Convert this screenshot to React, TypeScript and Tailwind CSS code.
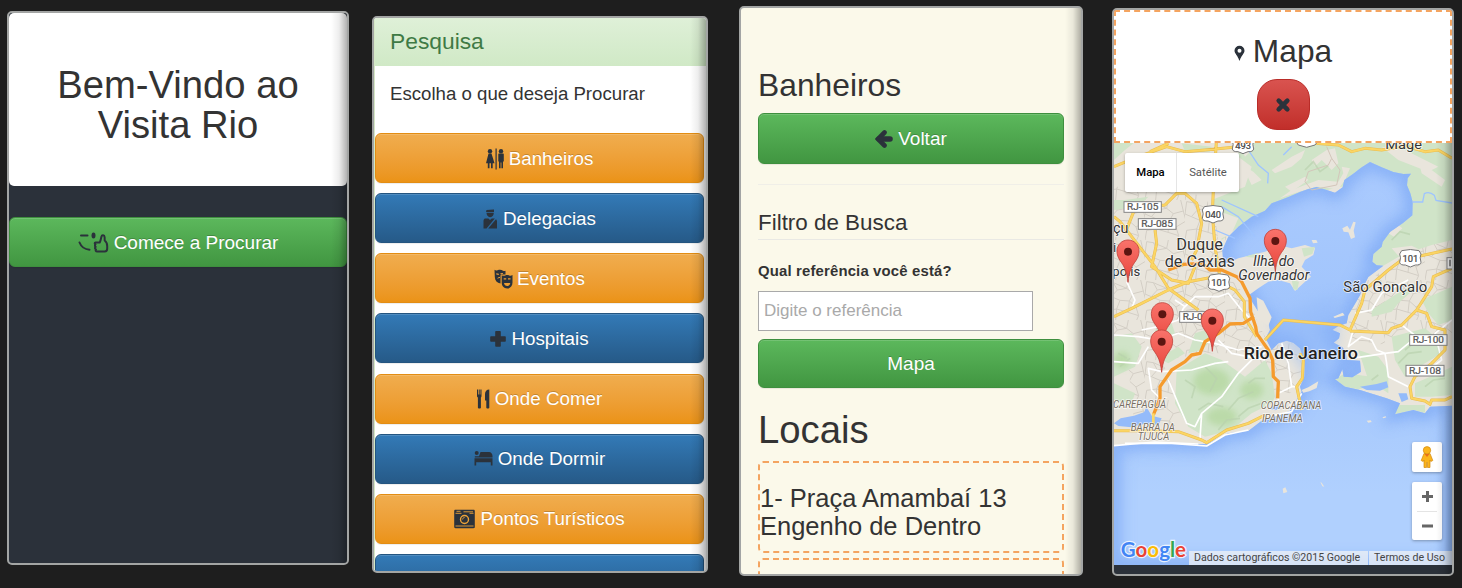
import React from "react";

const INK = "#2b323b";

function Phone({ className, children }: { className: string; children: React.ReactNode }) {
  return (
    <section className={`relative shrink-0 overflow-hidden rounded-[5px] border-2 border-[#a3a5a4] ${className}`}>
      {children}
      <div className="pointer-events-none absolute inset-y-0 right-0 w-[16px] bg-gradient-to-r from-transparent via-black/7 to-black/30" />
    </section>
  );
}

const tones = {
  green: "from-[#5cb85c] to-[#419641] border-[#3e8f3e]",
  orange: "from-[#f0ad4e] to-[#eb9316] border-[#e38d13]",
  blue: "from-[#337ab7] to-[#265a88] border-[#245580]",
};

function Button({ tone, className, children }: { tone: keyof typeof tones; className: string; children: React.ReactNode }) {
  return (
    <button
      className={`flex w-full shrink-0 items-center justify-center rounded-[6px] border bg-gradient-to-b pt-px leading-[24px] text-white shadow-[inset_0_1px_0_rgba(255,255,255,.15),0_1px_1px_rgba(0,0,0,.075)] [text-shadow:0_-1px_0_rgba(0,0,0,.2)] ${tones[tone]} ${className}`}
    >
      {children}
    </button>
  );
}

function Icon({ w, h = 20, className = "mr-[5px]", children }: { w: number; h?: number; className?: string; children: React.ReactNode }) {
  return (
    <svg width={w} height={h} viewBox={`0 0 ${w} ${h}`} fill={INK} className={`shrink-0 ${className}`}>
      {children}
    </svg>
  );
}

const GreetIcon = () => (
  <Icon w={31} h={22} className="mr-[5px]">
    <g fill="none" stroke={INK} strokeWidth="2" strokeLinecap="round" strokeLinejoin="round">
      <path d="M3 3.500h6.500M1.500 10.500c1.500 3.800 5 6.800 10 7.200" />
      <path d="M17.500 10.500h4.200c.9-1.600 1.200-3.500 1.700-5.800.5-2 3-1.700 3.200.3l.1 3.500c1.800 1.300 2.500 3 2.500 5.500v2.500c0 1.800-.8 3-2.500 3h-7.500c-1.500 0-2-1.200-1.200-2.100-1.300-.5-1.300-2-.3-2.500-1-.6-1-1.900-.2-2.400-1.100-.6-1-2 0-2z" />
    </g>
    <ellipse cx="15.500" cy="3.500" rx="2" ry="3" />
  </Icon>
);

const RestroomIcon = () => (
  <Icon w={18} h={22}>
    <circle cx="4" cy="3.200" r="2.200" />
    <path d="M2.500 5.500h3L8.500 15.300H6.700v5H5V15.300H3.500v5H1.800v-5H0z" />
    <path d="M9.500.5h1.200v21H9.500z" />
    <circle cx="15" cy="3.200" r="2.200" />
    <path d="M12.300 6.500c0-.6.4-1 1-1h3.500c.6 0 1 .4 1 1v7h-.8V20.300h-1.600V14.500h-.8v5.800H13V13.500h-.7z" />
  </Icon>
);

const PoliceIcon = () => (
  <Icon w={15} h={20}>
    <path d="M3.500 1 11 .5v2.500h-8zM3.500 3.800h7.300c.1 2.200-1.300 4.400-3.600 4.400S3.400 6 3.500 3.800z" />
    <path d="M1.800 9.500h3.600L7 11l1.700-1.500h3.100L3.500 19.500H.5v-7.300c0-1.400.5-2.200 1.300-2.700zM13 10.200c.7.500 1 1.300 1 2.300v7H5.200z" />
  </Icon>
);

const MasksIcon = () => (
  <Icon w={19} h={20} className="mr-[4px]">
    <path fillRule="evenodd" d="M.5.800c1 .9 2 .9 3 .5 2.500-.8 4-.4 5.500.4.900.4 1.800.3 2.500 0v3.800H8c-1 0-1.500.4-1.500 1.400v7.500C3 13.900 1 11.700.8 8zM2.300 4.200l2.500.6V6L2.300 5.400zM6.400 4.300l2.500-.4v1.100l-2.500.3zM3.300 10c.8-.9 1.600-1 2.700-1V8C4.500 7.800 3.500 8.500 3.300 10z" />
    <path fillRule="evenodd" d="M7.700 6.200c1 .7 2.500.7 3.500.2 1.300-.5 2.700-.5 4 0 1 .4 2.200.3 3.300-.3v7.500c0 3.500-2.400 5.900-5.400 5.900s-5.400-2.400-5.400-5.900zM9.700 9.300v1.200h2.500V9.300zM14 9.300v1.200h2.500V9.300zM10 14c.5 2.200 1.500 3 3.100 3s2.700-.8 3.200-3z" />
  </Icon>
);

const CrossIcon = () => (
  <Icon w={16} h={20}>
    <path d="M6 2h4c.4 0 .8.300.8.800v4.400H15c.5 0 .8.300.8.800v4c0 .5-.3.800-.8.800h-4.200V17c0 .5-.4.800-.8.800H6c-.5 0-.8-.3-.8-.8v-4.200H1c-.5 0-.8-.3-.8-.8V8c0-.5.3-.8.8-.8h4.200V2.800c0-.5.3-.8.800-.8z" />
  </Icon>
);

const CutleryIcon = () => (
  <Icon w={13} h={20}>
    <path d="M0 .5h1v5h.7v-5h1v5h.7v-5h1.100v6.500c0 .9-.3 1.300-.6 1.500v10c0 .7-.5 1-1.500 1s-1.500-.3-1.500-1v-10C.5 8.300 0 7.800 0 7zM12.300.5v18c0 .6-.5 1-1.500 1s-1.500-.4-1.500-1v-7H8V5C8 2.500 9.700.5 12.300.5z" />
  </Icon>
);

const BedIcon = () => (
  <Icon w={19} h={20} className="mr-[5px] mb-[3px]">
    <circle cx="2.700" cy="5" r="2" />
    <path d="M.5 10.200h18V17.500h-1.700v-3.300H2.200v3.300H.5zM6.500 4h8.500c2 0 3.500 1.800 3.500 4v1.500H.8V8.200H5z" />
  </Icon>
);

const CameraIcon = () => (
  <Icon w={21} h={20}>
    <path fillRule="evenodd" d="M1.500.8h18c.8 0 1.300.5 1.300 1.300v16c0 .8-.5 1.200-1.300 1.200h-18c-.8 0-1.300-.4-1.300-1.200v-16C.2 1.300.7.800 1.500.800z" />
    <path d="M2.500 2.300h4M9.500 2.800h9.500M1.500 4.300h6M15.500 4.300h4M1.500 17h18" stroke="#eda338" strokeWidth=".9" />
    <circle cx="10.500" cy="10.500" r="4" fill="none" stroke="#eda338" strokeWidth="1.400" />
    <path d="M8.600 10.500c0-1 .8-2 2-2" fill="none" stroke="#eda338" strokeWidth=".9" />
  </Icon>
);

const menu: { label: string; icon: () => React.JSX.Element }[] = [
  { label: "Banheiros", icon: RestroomIcon },
  { label: "Delegacias", icon: PoliceIcon },
  { label: "Eventos", icon: MasksIcon },
  { label: "Hospitais", icon: CrossIcon },
  { label: "Onde Comer", icon: CutleryIcon },
  { label: "Onde Dormir", icon: BedIcon },
  { label: "Pontos Turísticos", icon: CameraIcon },
];

function Marker({ x, y }: { x: number; y: number }) {
  return (
    <g transform={`translate(${x} ${y})`}>
      <path
        d="M0 0C-3-34-12-49-23-64C-30-74-33-83-33-94C-33-113-18-127 0-127S33-113 33-94C33-83 30-74 23-64C12-49 3-34 0 0Z"
        fill="url(#pin)"
        stroke="#c2433c"
        strokeWidth="2.500"
      />
      <circle cy="-92" r="12" fill="#5c1511" />
    </g>
  );
}

function Plate({ x, y, w, text }: { x: number; y: number; w: number; text: string }) {
  return (
    <g>
      <rect x={x} y={y} width={w} height="32" fill="#fff" stroke="#858585" strokeWidth="3" />
      <text x={x + w / 2} y={y + 26} fontSize="29" textAnchor="middle" textLength={w - 18} lengthAdjust="spacingAndGlyphs" fill="#555" stroke="#555" strokeWidth=".7">
        {text}
      </text>
    </g>
  );
}

function Shield({ x, y, text }: { x: number; y: number; text: string }) {
  return (
    <g transform={`translate(${x} ${y})`}>
      <path d="M-26-23Q0-30 26-23L32-13Q27-3 32 12Q30 21 15 20L0 26L-15 20Q-30 21-32 12Q-27-3-32-13Z" fill="#fff" stroke="#777" strokeWidth="3" />
      <text y="11" fontSize="28" textAnchor="middle" fill="#444" stroke="#444" strokeWidth=".7">
        {text}
      </text>
    </g>
  );
}

const BLOCKS =
  "M5 5l20 3l12 22l-18 20l-19-8zM37 30l28-5l20 16l-12 22l-28-2l-26-11M65 25l5-25M85 41l30-8l8 30l-30 18l-20-18M45 61l-10 26l-30 4M73 63l-4 34l-34-10M93 81l8 26l-32-10M5 91l-5 29M35 87l-3 33M101 107l-6 13M25 8l40 17M115 33l-8-33";

const WATER =
  "M525 601L552 590L585 576L610 567L635 561L665 570L690 578L713 562L718 540L745 521L768 503L795 486L830 502L865 516L895 522L918 521L908 535L906 556L916 580L923 606L922 646L895 668L855 696L833 726L830 740L805 762L802 785L815 796L835 797L790 831L775 860L765 886L748 915L730 945L725 970L700 978L682 990L705 1000L702 1015L686 1028L712 1042L722 1055L725 1080L765 1082L768 1115L742 1132L716 1130L712 1108L700 1135L690 1138L720 1160L765 1170L845 1195L885 1210L870 1243L925 1230L960 1240L975 1220L1041 1217V1695H27V1336L120 1328L220 1330L305 1333L370 1300L430 1293L470 1262L510 1250L555 1232L590 1175L585 1160L598 1130L600 1085L585 1045L565 1028L545 1022L520 1030L500 1050L482 1015L495 990L488 960L460 935L438 900L430 870L400 830L355 790L352 750L370 710L400 680L440 650L480 632L500 610Z";

const ROADS =
  "M27 500L100 470L185 440L240 455L300 450L400 440M135 455L190 430M334 426L325 570L322 640L330 740L345 830M630 430L700 435L740 455L780 445L830 450L900 438L960 455L1000 450L1041 475M27 650L45 665L150 800L190 865L280 930M60 700L90 625L180 615L215 580L240 580L275 610L290 670L275 750L260 780M150 690L155 730L140 800L200 840L250 850L270 800M27 950L80 925L190 870L250 845L330 830M350 850L390 870L418 905L418 950L455 1010M480 1020L535 960L705 975L735 990L770 910L780 870L850 810L890 780L1041 747M735 993L850 998L860 985L890 975L935 930L980 860L985 830L1041 805M935 930L965 940L980 980L1020 990L1020 1050L980 1090L930 1130L915 1160L920 1195L960 1203L975 1213L980 1200L1020 1200L1041 1190M27 1292H130L220 1295L290 1320L305 1328L365 1290L430 1270L480 1245M590 1230L575 1160L592 1135L595 1080L585 1060";

function RioMap() {
  return (
    <svg width="338" height="423" viewBox="27 426 1014 1269" fontFamily="Roboto, sans-serif" className="block">
      <defs>
        <linearGradient id="pin" x1="0" y1="0" x2="0" y2="1">
          <stop offset="0" stopColor="#f9736b" />
          <stop offset="1" stopColor="#e8453c" />
        </linearGradient>
        <linearGradient id="sea" gradientUnits="userSpaceOnUse" x1="0" y1="480" x2="0" y2="1480">
          <stop offset="0" stopColor="#abcbfe" />
          <stop offset=".5" stopColor="#a0c4fc" />
          <stop offset="1" stopColor="#b0d0fe" />
        </linearGradient>
        <clipPath id="coast">
          <path d={WATER} />
        </clipPath>
        <pattern id="blocks" width="120" height="120" patternUnits="userSpaceOnUse">
          <path d={BLOCKS} fill="none" stroke="#d3cec5" strokeWidth="3" />
        </pattern>
        <filter id="soft" x="-20%" y="-20%" width="140%" height="140%">
          <feGaussianBlur stdDeviation="9" />
        </filter>
        <filter id="haze" x="-20%" y="-20%" width="140%" height="140%">
          <feGaussianBlur stdDeviation="20" />
        </filter>
      </defs>

      <rect x="27" y="426" width="1014" height="1269" fill="#e9e5dc" />
      <path
        d="M27 560H180L300 590L370 720L360 790L430 850L450 950L480 1010L430 1060L300 1060L180 1080L100 1160L27 1010ZM760 860L850 800L960 720H1041V1000L960 1060L880 1040L740 1020L730 960ZM470 1040L560 1030L590 1090L580 1170L500 1200L440 1100ZM70 1100L170 1080L230 1230L200 1300L90 1290Z"
        fill="url(#blocks)"
      />

      <g fill="#d0e4c8">
        <path d="M400 426H1041V720L980 735L890 765L835 797L815 796L802 785L805 762L833 726L900 560H700L570 600L500 640L455 700L400 680L350 720L320 600L420 560L440 500L400 470Z" />
        <path d="M27 426H90L60 450L27 480ZM60 600L130 590L110 610L70 625L27 630V600ZM230 430L320 440L315 455H240Z" />
        <path d="M27 1010L80 1000L110 1040L90 1100L27 1130ZM27 1150L90 1180L80 1210L27 1200ZM150 990L200 970L210 1000L170 1020ZM270 1000L300 990L330 1010L290 1050L250 1060ZM160 1075L220 1040L240 1060L190 1090Z" />
        <path d="M215 1110L300 1060L350 1080L420 1130L480 1080L500 1120L510 1190L500 1210L440 1240L380 1290L300 1310L250 1280L210 1210Z" />
        <path d="M800 930L870 885L930 850L925 870L880 910L860 935L800 950ZM950 900L1041 860V960L1000 975L970 940ZM860 1010L960 985L990 1010L1010 1060L960 1090L900 1130L870 1080ZM760 1050L820 1070L850 1110L850 1180L790 1140ZM690 1138L720 1120L800 1130L840 1150L760 1168L720 1160ZM930 1150L1000 1120L1041 1100V1185L980 1190L930 1190ZM880 1215L960 1215L960 1238L925 1230L870 1243Z" />
      </g>
      <g fill="#e9e5dc">
        <path d="M420 500L445 515L470 540L440 555L430 535ZM500 510L560 470L600 450L590 475L560 500L510 520ZM400 426H430L450 440L420 470ZM620 480L665 450L690 445L700 490L680 510L650 480L630 500ZM640 540L700 545L715 520L710 500L735 505L720 540L700 568L635 560L580 576L525 595L560 570Z" />
        <path d="M830 440L900 450L1000 500L970 515L880 480ZM940 480L1020 540L1010 560L950 520ZM540 560L600 530L610 540L560 575Z" />
        <path d="M330 650L360 640L400 655L380 700L340 720ZM860 745l60-8l20 10l-60 20ZM850 700l30-25l12 10l-25 25Z" />
      </g>
      <g fill="#b4d79f" opacity=".75" filter="url(#soft)">
        <ellipse cx="320" cy="1145" rx="55" ry="40" />
        <ellipse cx="440" cy="1170" rx="35" ry="28" />
        <ellipse cx="350" cy="1250" rx="45" ry="28" />
        <ellipse cx="50" cy="1080" rx="25" ry="25" />
      </g>
      <g stroke="#b9d2ae" strokeWidth="5" opacity=".7" fill="none">
        <path d="M240 1140l30 20l-10 35M300 1100l35 35l-20 40M280 1230l30-20l45 10M370 1230l30-35l45-20M400 1250l30-25l40-15M430 1150l20-15l30 0M340 1290l25-30l40-5M40 1060l25 15M45 1100l30-25" />
        <path d="M600 510l25-25l20 30l25-18M860 720l25-25l30 8M880 1090l30-30l40-5M900 1050l30-25l30 0M960 1160l25-20l35-5M800 1140l20-15" />
      </g>

      <path d={WATER} fill="url(#sea)" />
      <g clipPath="url(#coast)">
        <path d={WATER} fill="none" stroke="#84aef6" strokeWidth="50" opacity=".75" filter="url(#haze)" />
        <path d={WATER} fill="none" stroke="#84aef6" strokeWidth="14" opacity=".5" filter="url(#soft)" />
      </g>
      <path d="M500 960L690 880L700 1000L640 1180L600 1120L520 1010Z" fill="#8fb7f8" opacity=".45" filter="url(#haze)" />

      <g fill="#e9e5dc">
        <path d="M340 800L400 775L480 755L520 735L560 745L600 735L630 745L625 765L600 780L590 800L618 830L600 845L570 873L555 850L520 840L490 845L460 865L425 890L380 840Z" />
        <path d="M712 685l15-8l8 12l10-24l7 2l-6 25l4 20l-12 5l-8-20l-14-2Z" />
        <path d="M455 892l20 10l25 50l-10 25l-30-20ZM620 720l14 0l4 8l-14 2Z" />
        <path d="M590 1170l20-8l30-18l-5 20l-22 10l-18 4ZM785 1262l12-1l3 5l-10 2ZM832 1252l10-3l2 3l-8 3ZM533 1466l8-4l6 14l-12 4ZM646 1446l4 2l8 12l-6-1ZM685 950l28-12l6 8l-30 8Z" />
      </g>
      <g fill="#d0e4c8">
        <path d="M590 745l40-5l-8 22l-25 8ZM560 840l22 5l-5 25l-12-2ZM420 770l40-12l-10 15ZM505 740l20-6l5 22Z" />
      </g>
      <g fill="#94bbfa">
        <path d="M27 1270l20-15l40-8l30-10l8-15l15 25l30 8l-10 20l-35-5l-45 12l-40-4ZM490 1225l25-10l15 8l-20 8ZM765 1160l50-8l30-8l5 18l-25 10l-40-2ZM880 1180l25 0l5 18l-20 8Z" />
      </g>
      <g fill="none" stroke="#9ec4ff" strokeWidth="4">
        <path d="M430 450l30 45l30 25l-2 30M560 440l-25 25M350 620l50 30l50 60M923 606h30l5-25q15-8 30 5l5 15l48 8M350 600l110 50M330 690l60 25" />
      </g>

      <g fill="none" stroke="#fff" strokeWidth="5" strokeLinejoin="round">
        <path d="M27 1005L100 1010L160 1020L220 1000L270 1020L330 1030L400 1050L470 1040M65 845L90 900L80 925M210 900L240 920L270 890L340 890L370 880L410 930L440 960M270 890L235 925L220 960L160 980L110 990" />
        <path d="M170 1115L130 1105L140 1170L170 1200M170 1115L260 1110L330 1090L370 1085M190 1140L215 1200L245 1270L270 1280L290 1240L350 1190L400 1120L450 1070L480 1060M27 1085L100 1090L130 1040M27 1337L150 1326L280 1332M285 1315L290 1240" />
        <path d="M340 1020L380 1060L430 1070L480 1080M530 1030L550 1090L560 1160L575 1160M560 1160L520 1180L520 1200" />
        <path d="M745 990L730 1040L770 1010L800 1020L815 1050L840 1060L845 1090L850 1130L910 1160M750 940L800 930L830 880L910 840M840 1060L880 1055L935 1010L890 975M740 1075L840 1060M1041 960L990 1000L1010 1080L970 1110" />
        <path d="M430 1290L360 1305L305 1338L200 1330L60 1330M510 1245L560 1235L590 1180" />
      </g>
      <path d="M665 440l15 35l-10 20l-60 20l-10 30l20 25l75-15M680 475l25 35l-10 45" fill="none" stroke="#d3c6ba" strokeWidth="3" />

      <path d={ROADS} fill="none" stroke="#e9bc50" strokeWidth="9" strokeLinejoin="round" />
      <path d={ROADS} fill="none" stroke="#fbd564" strokeWidth="6" strokeLinejoin="round" />
      <path
        d="M190 810L235 793L290 790L315 810L350 810L395 830L410 845L435 895L437 935L452 980L455 1000L490 1050L503 1080L505 1130L520 1145L518 1195M447 950L415 970L375 972L340 1000L300 1025L285 1060L260 1065L240 1085L200 1110L165 1160V1195L145 1245"
        fill="none"
        stroke="#f59b2d"
        strokeWidth="10"
        strokeLinejoin="round"
      />
      <path d="M145 1240V1275" stroke="#fbd96b" strokeWidth="8" />

      <Plate x={57} y={605} w={112} text="RJ-105" />
      <Plate x={100} y={656} w={113} text="RJ-085" />
      <Plate x={224} y={935} w={112} text="RJ-071" />
      <Plate x={914} y={1004} w={112} text="RJ-100" />
      <Plate x={903} y={1096} w={114} text="RJ-108" />
      <rect x="1026" y="773" width="30" height="34" fill="#fff" stroke="#858585" strokeWidth="3" />
      <path d="M1035 779V799" stroke="#444" strokeWidth="3.500" />
      <Shield x={414} y={435} text="493" />
      <path d="M574 426L580 435L605 442L630 435L637 426Z" fill="#fff" stroke="#777" strokeWidth="3" />
      <Shield x={324} y={643} text="040" />
      <Shield x={342} y={848} text="101" />
      <Shield x={916} y={775} text="101" />

      <g fill="#343434" stroke="#fff" strokeWidth="5" strokeOpacity=".75" strokeLinejoin="round" paintOrder="stroke" fontSize="47">
        <text x="841" y="447" fontSize="40" textLength="110" lengthAdjust="spacingAndGlyphs">Magé</text>
        <text x="24" y="698" fontSize="43">çu</text>
        <text x="24" y="757" fontSize="40">i</text>
        <text x="22" y="828" fontSize="41" textLength="84" lengthAdjust="spacingAndGlyphs">polis</text>
        <text x="214" y="750" textLength="140" lengthAdjust="spacingAndGlyphs">Duque</text>
        <text x="179" y="800" textLength="211" lengthAdjust="spacingAndGlyphs">de Caxias</text>
        <text x="444" y="799" fontSize="41" fontStyle="italic" textLength="124" lengthAdjust="spacingAndGlyphs">Ilha do</text>
        <text x="400" y="840" fontSize="41" fontStyle="italic" textLength="213" lengthAdjust="spacingAndGlyphs">Governador</text>
        <text x="715" y="876" fontSize="43" textLength="252" lengthAdjust="spacingAndGlyphs">São Gonçalo</text>
        <text x="416" y="1078" fontSize="50" fontWeight="500" fill="#222" textLength="343" lengthAdjust="spacingAndGlyphs">Rio de Janeiro</text>
      </g>
      <g fill="#786f62" stroke="#fff" strokeWidth="5" strokeOpacity=".7" paintOrder="stroke" fontSize="30" fontStyle="italic">
        <text x="24" y="1225" textLength="159" lengthAdjust="spacingAndGlyphs">CAREPAGUÁ</text>
        <text x="77" y="1292" textLength="133" lengthAdjust="spacingAndGlyphs">BARRA DA</text>
        <text x="98" y="1321" textLength="95" lengthAdjust="spacingAndGlyphs">TIJUCA</text>
        <text x="467" y="1228" textLength="182" lengthAdjust="spacingAndGlyphs">COPACABANA</text>
        <text x="471" y="1267" textLength="122" lengthAdjust="spacingAndGlyphs">IPANEMA</text>
      </g>

      <Marker x={69} y={847} />
      <Marker x={511} y={815} />
      <Marker x={172} y={1035} />
      <Marker x={322} y={1054} />
      <Marker x={170} y={1117} />

      <text x="47" y="1672" fontSize="63" fontFamily="Lato, sans-serif" stroke="#fff" strokeWidth="7" strokeOpacity=".8" paintOrder="stroke" textLength="196" lengthAdjust="spacingAndGlyphs" fontWeight="700">
        <tspan fill="#4285f4">G</tspan>
        <tspan fill="#ea4335">o</tspan>
        <tspan fill="#fbbc05">o</tspan>
        <tspan fill="#4285f4">g</tspan>
        <tspan fill="#34a853">l</tspan>
        <tspan fill="#ea4335">e</tspan>
      </text>
    </svg>
  );
}

export default function App() {
  return (
    <main className="flex h-[588px] w-[1462px] items-start overflow-hidden bg-[#1e1e1e] pl-[7px] font-['Liberation_Sans',Arial,sans-serif] text-[#333]">
      <Phone className="mt-[11px] h-[554px] w-[342px] bg-[#2b313a]">
        <div className="h-[173px] rounded-[5px] bg-white pt-[52px] text-center text-[38.2px] leading-[40px]">
          <h1>
            Bem-Vindo ao
            <br />
            Visita Rio
          </h1>
        </div>
        <Button tone="green" className="mt-[31px] h-[50px] text-[19px]">
          <GreetIcon />
          Comece a Procurar
        </Button>
      </Phone>

      <Phone className="mt-[16px] ml-[23px] h-[557px] w-[336px] bg-white">
        <div className="flex h-full flex-col border-l border-[#d6e9c6] pr-[2px]">
          <h3 className="-mr-[2px] h-[48px] shrink-0 bg-gradient-to-b from-[#dff0d8] to-[#d0e9c6] pl-[15px] text-[22.8px] leading-[47px] text-[#3f7a45]">Pesquisa</h3>
          <p className="h-[67px] shrink-0 pl-[15px] text-[18.65px] leading-[56px]">Escolha o que deseja Procurar</p>
          <nav className="flex flex-col gap-[10.17px]">
            {menu.map(({ label, icon: Glyph }, i) => (
              <Button key={label} tone={i % 2 ? "blue" : "orange"} className="h-[50px] text-[18.8px]">
                <Glyph />
                {label}
              </Button>
            ))}
            <Button tone="blue" className="h-[50px]">
              <Icon w={21} h={20}>
                <path d="M0 1h20v15H0z" />
              </Icon>
            </Button>
          </nav>
        </div>
      </Phone>

      <Phone className="mt-[6px] ml-[31px] h-[570px] w-[344px] bg-[#fbf9ea]">
        <div className="flex flex-col pt-[56px] pr-[17px] pl-[17px]">
          <h2 className="h-[43px] text-[31.8px] leading-[43px]">Banheiros</h2>
          <Button tone="green" className="mt-[6px] h-[51px] text-[19px]">
            <Icon w={18} h={20}>
              <path d="M9.500 3.500 3 10l6.500 6.500" fill="none" stroke={INK} strokeWidth="4.600" strokeLinecap="round" strokeLinejoin="miter" />
              <path d="M4 10h11" stroke={INK} strokeWidth="5.600" strokeLinecap="round" />
            </Icon>
            Voltar
          </Button>
          <hr className="mt-[20px] border-[#f0efe8]" />
          <h3 className="mt-[21px] h-[34px] border-b border-[#e9e9e4] text-[22.4px] leading-[33px]">Filtro de Busca</h3>
          <label className="mt-[21px] h-[20px] text-[14.9px] leading-[21px] font-bold tracking-[0.16px]">Qual referência você está?</label>
          <input placeholder="Digite o referência" className="mt-[10px] h-[40px] w-[275px] border border-[#a9a9a9] bg-white px-[5px] text-[17px] placeholder:text-[#a9a9a9]" />
          <Button tone="green" className="mt-[8px] h-[49px] text-[19px]">
            Mapa
          </Button>
          <h1 className="mt-[22px] h-[40px] text-[38.3px] leading-[40px]">Locais</h1>
          <div className="mt-[11px] h-[92px] shrink-0 rounded-[5px] border-2 border-dashed border-[#f4a460] pt-[21px] text-[25.5px] leading-[28px]">
            1- Praça Amambaí 13
            <br />
            Engenho de Dentro
          </div>
          <div className="mt-[5px] h-[92px] shrink-0 rounded-[5px] border-2 border-dashed border-[#f4a460]" />
        </div>
      </Phone>

      <Phone className="mt-[8px] ml-[29px] h-[568px] w-[342px] bg-[#2b313a]">
        <header className="relative z-10 flex h-[133px] flex-col items-center border-2 border-dashed border-[#f4a460] bg-white pt-[18px]">
          <h2 className="flex h-[42px] items-center text-[31.7px] leading-[42px]">
            <Icon w={11} h={16} className="mt-[4px] mr-[8px]">
              <path fillRule="evenodd" d="M5.500.8a5 5 0 0 1 5 5C10.500 8.500 7 11 5.800 15.500h-.6C4 11 .5 8.500.5 5.800a5 5 0 0 1 5-5zM5.500 3.700a2 2 0 1 0 0 4a2 2 0 0 0 0-4z" />
            </Icon>
            Mapa
          </h2>
          <button className="mt-[7px] flex h-[51px] w-[53px] items-center justify-center rounded-[20px] border border-[#b92c28] bg-gradient-to-b from-[#d9534f] to-[#c12e2a]">
            <Icon w={16} h={16} className="mt-px">
              <path d="M3.700 3.700l8.600 8.600M12.300 3.700l-8.600 8.600" stroke={INK} strokeWidth="4.600" strokeLinecap="round" />
            </Icon>
          </button>
        </header>
        <div className="relative -mt-px h-[423px] font-[Roboto,sans-serif]">
          <RioMap />
          <div className="absolute top-[11px] left-[11px] flex h-[39px] w-[114px] rounded-[2px] bg-white text-center text-[11.3px] leading-[39px] shadow-[0_1px_3px_rgba(0,0,0,.3)]">
            <span className="w-[52px] border-r border-[#e5e5e5] font-medium text-black">Mapa</span>
            <span className="flex-1 text-[#565656]">Satélite</span>
          </div>
          <div className="absolute top-[300px] left-[298px] flex h-[30px] w-[30px] items-center justify-center rounded-[2px] bg-white shadow-[0_1px_3px_rgba(0,0,0,.3)]">
            <svg width="14" height="22" viewBox="0 0 14 22">
              <path d="M4 7.500h6l2.800 7-2 1L10 14v7.500H7.500v-5h-1v5H4V14l-.8 1.500-2-1z" fill="#fbb41b" stroke="#d28a10" strokeWidth=".7" />
              <circle cx="7" cy="4.300" r="3.700" fill="#fbb41b" stroke="#d28a10" strokeWidth=".7" />
              <path d="M4.500 8h5L7 11z" fill="#e8701a" />
            </svg>
          </div>
          <div className="absolute top-[340px] left-[298px] flex h-[58px] w-[30px] flex-col items-center rounded-[2px] bg-white shadow-[0_1px_3px_rgba(0,0,0,.3)]">
            <svg width="30" height="58" viewBox="0 0 30 58">
              <path d="M10 14.500h11M15.500 9v11M10 44h11" stroke="#666" strokeWidth="3" />
              <path d="M5 29.500h20" stroke="#e4e4e4" />
            </svg>
          </div>
          <div className="absolute right-0 bottom-0 flex h-[14px] w-[263px] items-center gap-px text-[10.6px] leading-[14px] whitespace-nowrap text-[#444]">
            <span className="w-[179px] bg-[#f5f5f5]/70 pl-[5px]">Dados cartográficos ©2015 Google</span>
            <span className="flex-1 bg-[#f5f5f5]/70 pl-[5px]">Termos de Uso</span>
          </div>
        </div>
      </Phone>
    </main>
  );
}
